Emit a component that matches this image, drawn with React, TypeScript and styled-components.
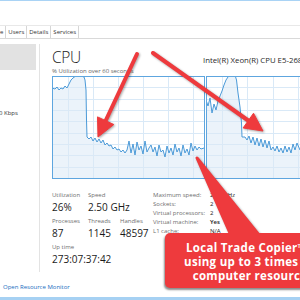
import React from "react";
import styled, { createGlobalStyle } from "styled-components";

const GlobalStyle = createGlobalStyle`
  html, body { margin: 0; padding: 0; background: #fff; }
  body { width: 300px; height: 300px; overflow: hidden; }
  #root { width: 300px; height: 300px; }
`;

const UI_FONT = `"Open Sans", "Noto Sans", "Liberation Sans", sans-serif`;
const RED = "#ee3a3d";

const Page = styled.div`
  position: relative;
  width: 300px;
  height: 300px;
  overflow: hidden;
  display: flex;
  flex-direction: column;
  background: #fff;
  font-family: ${UI_FONT};
  color: #1f1f1f;
`;

const TopAccent = styled.div`
  flex: none;
  height: 1px;
  background: #a9d3f5;
`;

const TitleSpace = styled.div`
  flex: none;
  height: 24px;
`;

const TabBar = styled.div`
  flex: none;
  display: flex;
  height: 12px;
  border-top: 1px solid #e8e8e8;
  border-bottom: 1px solid #d9d9d9;
`;

const Tab = styled.div<{ $offset?: number }>`
  flex: none;
  font-size: 6px;
  line-height: 12px;
  padding: 0 2px;
  border-right: 1px solid #d6d6d6;
  color: #333;
  white-space: nowrap;
  margin-left: ${(p) => p.$offset ?? 0}px;
`;

const Body = styled.div`
  flex: none;
  height: 234px;
  display: flex;
  align-items: flex-start;
`;

const Sidebar = styled.div`
  flex: none;
  width: 39px;
  height: 228px;
  margin-top: 5px;
  border-right: 1px solid #e3e3e3;
  display: flex;
  flex-direction: column;
  overflow: hidden;
`;

const SideItem = styled.div`
  width: 36px;
  height: 26px;
  background: #e2e2e2;
`;

const SideText = styled.div`
  margin-top: 39px;
  margin-left: -1px;
  font-size: 6px;
  line-height: 8px;
  color: #333;
  white-space: nowrap;
`;

const Content = styled.div`
  flex: 1;
  min-width: 0;
  overflow: hidden;
  padding-left: 12px;
  padding-top: 9px;
`;

const Header = styled.div`
  display: grid;
  grid-template-columns: 151px 1fr;
  align-items: baseline;
  height: 18px;
`;

const Title = styled.div`
  font-size: 15.5px;
  font-weight: 300;
  line-height: 18px;
  letter-spacing: -0.3px;
  color: #1a1a1a;
`;

const CpuModel = styled.div`
  font-size: 7.8px;
  line-height: 10px;
  white-space: nowrap;
  overflow: hidden;
  color: #2a2a2a;
`;

const Subtitle = styled.div`
  margin-top: 1px;
  font-size: 6px;
  line-height: 8px;
  color: #666;
  white-space: nowrap;
`;

const ChartRow = styled.div`
  margin-top: 1px;
  display: flex;
  gap: 1px;
  height: 103px;
`;

const ChartSvg = styled.svg`
  flex: none;
  display: block;
`;

const StatsRow = styled.div`
  margin-top: 12px;
  display: flex;
`;

const MainStats = styled.div`
  flex: none;
  width: 101px;
`;

const StatLine = styled.div`
  display: grid;
  grid-template-columns: 36px 32px auto;
  margin-bottom: 3px;
`;

const StatLabel = styled.div`
  font-size: 6px;
  line-height: 8px;
  color: #6e6e6e;
  margin-bottom: 2px;
  white-space: nowrap;
`;

const StatValue = styled.div`
  font-size: 10px;
  line-height: 13px;
  color: #1a1a1a;
  white-space: nowrap;
`;

const SpecList = styled.div`
  display: grid;
  grid-template-columns: 57px auto;
  grid-auto-rows: 9px;
  font-size: 6px;
  line-height: 9px;
`;

const SpecLabel = styled.div`
  color: #6e6e6e;
  white-space: nowrap;
`;

const SpecValue = styled.div<{ $strong?: boolean }>`
  color: #1a1a1a;
  font-weight: ${(p) => (p.$strong ? 600 : 400)};
  white-space: nowrap;
`;

const Footer = styled.div`
  flex: none;
  height: 24px;
  box-sizing: border-box;
  padding: 10px 0 0 3px;
`;

const ResourceLink = styled.a`
  display: block;
  font-size: 6px;
  line-height: 8px;
  color: #1a6dc0;
  text-decoration: none;
`;

const BottomBar = styled.div`
  flex: none;
  height: 3px;
  background: #a6d1f3;
`;

const Overlay = styled.svg`
  position: absolute;
  left: 0;
  top: 0;
  width: 300px;
  height: 300px;
  pointer-events: none;
  filter: drop-shadow(1px 1px 1px rgba(0, 0, 0, 0.35));
`;

const Callout = styled.div`
  position: absolute;
  left: 165px;
  top: 233px;
  width: 176px;
  height: 55px;
  box-sizing: border-box;
  padding-top: 2px;
  background: ${RED};
  border-radius: 5px;
  box-shadow: -1px 2px 2px rgba(0, 0, 0, 0.45);
  color: #fff;
  font-family: "Open Sans", "Lato", sans-serif;
  font-weight: 700;
  font-size: 11.5px;
  letter-spacing: 0.3px;
  line-height: 14px;
  text-align: center;
  display: flex;
  flex-direction: column;
  justify-content: center;
  white-space: nowrap;
`;

type Pt = [number, number];

const chart1: Pt[] = [
  [52, 88], [55, 89], [57, 87], [59, 90], [61, 88], [63, 89], [65, 86], [67, 88], [69, 84], [71, 80],
  [73, 78], [75, 76.5], [78, 76], [82, 76], [84, 77], [85, 80], [86, 90], [86.5, 120], [87, 137],
  [89, 139], [91, 137], [93, 141], [95, 138], [97, 142], [99, 139], [101, 143], [103, 140], [105, 145],
  [107, 143], [109, 146], [111, 145], [113, 149], [115, 147], [117, 150], [119, 149], [121, 152],
  [123, 150], [125, 153], [127, 150], [129, 141], [131, 153], [133, 144], [135, 155], [137, 142],
  [139, 150], [141, 146], [143, 154], [145, 141], [147, 152], [149, 148], [151, 145], [153, 152],
  [155, 147], [157, 156], [159, 145], [161, 152], [163, 150], [165, 157], [167, 146], [169, 153],
  [171, 148], [173, 155], [175, 144], [177, 152], [179, 148], [181, 156], [183, 145], [185, 153],
  [187, 149], [189, 155], [191, 143], [193, 151], [195, 146], [197, 150], [199, 147], [201, 149], [204, 148],
];

const chart2: Pt[] = [
  [206, 100], [208, 106], [210, 98], [212, 113], [214, 104], [216, 110], [218, 101], [220, 96],
  [222, 91], [224, 85], [226, 80], [228, 77], [230, 75], [235, 75], [236.5, 80], [238, 93], [240, 107],
  [241.5, 123], [242, 137], [245, 137], [247, 140], [249, 136], [251, 143], [253, 137], [255, 145],
  [257, 138], [259, 146], [261, 139], [263, 147], [265, 140], [267, 148], [269, 141], [271, 150],
  [273, 147], [275, 151], [277, 146], [279, 152], [281, 148], [283, 153], [285, 146], [287, 152],
  [289, 147], [291, 153], [293, 144], [295, 150], [297, 143], [300, 150], [303, 146],
];

function Chart({ width, originX, points, gridX }: { width: number; originX: number; points: Pt[]; gridX: number[] }) {
  const h = 103;
  const rows = Array.from({ length: 8 }, (_, i) => Math.round(((i + 1) * (h - 1)) / 9) + 0.5);
  const local = points.map(([x, y]) => `${(x - originX).toFixed(1)},${(y - 76).toFixed(1)}`).join(" ");
  const area = `0.5,${h - 1} ${local} ${width - 0.5},${h - 1}`;
  return (
    <ChartSvg width={width} height={h} viewBox={`0 0 ${width} ${h}`}>
      <rect x={0} y={0} width={width} height={h} fill="#fff" />
      {rows.map((y) => (
        <line key={`r${y}`} x1={0} x2={width} y1={y} y2={y} stroke="#d9e9f7" strokeWidth={1} />
      ))}
      {gridX.map((x) => (
        <line key={`c${x}`} x1={x + 0.5} x2={x + 0.5} y1={0} y2={h} stroke="#d9e9f7" strokeWidth={1} />
      ))}
      <polygon points={area} fill="#dbe9f6" fillOpacity={0.55} />
      <polyline points={local} fill="none" stroke="#4b9ad8" strokeWidth={1} strokeLinejoin="round" />
      <rect x={0.5} y={0.5} width={width - 1} height={h - 1} fill="none" stroke="#5ea6df" strokeWidth={1} />
    </ChartSvg>
  );
}

function Arrow({ from, to }: { from: Pt; to: Pt }) {
  const [x1, y1] = from;
  const [x2, y2] = to;
  const len = Math.hypot(x2 - x1, y2 - y1);
  const ux = (x2 - x1) / len;
  const uy = (y2 - y1) / len;
  const px = -uy;
  const py = ux;
  const headLen = 18;
  const half = 9;
  const bx = x2 - ux * headLen;
  const by = y2 - uy * headLen;
  const head = `${x2},${y2} ${bx + px * half},${by + py * half} ${bx - px * half},${by - py * half}`;
  return (
    <g>
      <line x1={x1} y1={y1} x2={bx + ux * 2} y2={by + uy * 2} stroke={RED} strokeWidth={4} strokeLinecap="round" />
      <polygon points={head} fill={RED} stroke={RED} strokeWidth={1} strokeLinejoin="round" />
    </g>
  );
}

export default function App() {
  return (
    <>
      <GlobalStyle />
      <Page>
        <TopAccent />
        <TitleSpace />
        <TabBar>
          <Tab $offset={-35}>Performance</Tab>
          <Tab>Users</Tab>
          <Tab>Details</Tab>
          <Tab>Services</Tab>
        </TabBar>
        <Body>
          <Sidebar>
            <SideItem />
            <SideText>0 Kbps</SideText>
          </Sidebar>
          <Content>
            <Header>
              <Title>CPU</Title>
              <CpuModel>Intel(R) Xeon(R) CPU E5-2680 v2 @ 2.80GHz</CpuModel>
            </Header>
            <Subtitle>% Utilization over 60 seconds</Subtitle>
            <ChartRow>
              <Chart width={153} originX={52} points={chart1} gridX={[16, 41, 66, 91, 116, 141]} />
              <Chart width={100} originX={206} points={chart2} gridX={[16, 41, 67, 92]} />
            </ChartRow>
            <StatsRow>
              <MainStats>
                <StatLine>
                  <div>
                    <StatLabel>Utilization</StatLabel>
                    <StatValue>26%</StatValue>
                  </div>
                  <div>
                    <StatLabel>Speed</StatLabel>
                    <StatValue>2.50 GHz</StatValue>
                  </div>
                </StatLine>
                <StatLine>
                  <div>
                    <StatLabel>Processes</StatLabel>
                    <StatValue>87</StatValue>
                  </div>
                  <div>
                    <StatLabel>Threads</StatLabel>
                    <StatValue>1145</StatValue>
                  </div>
                  <div>
                    <StatLabel>Handles</StatLabel>
                    <StatValue>48597</StatValue>
                  </div>
                </StatLine>
                <StatLine>
                  <div>
                    <StatLabel>Up time</StatLabel>
                    <StatValue>273:07:37:42</StatValue>
                  </div>
                </StatLine>
              </MainStats>
              <SpecList>
                <SpecLabel>Maximum speed:</SpecLabel>
                <SpecValue>2.50 GHz</SpecValue>
                <SpecLabel>Sockets:</SpecLabel>
                <SpecValue>2</SpecValue>
                <SpecLabel>Virtual processors:</SpecLabel>
                <SpecValue>2</SpecValue>
                <SpecLabel>Virtual machine:</SpecLabel>
                <SpecValue $strong>Yes</SpecValue>
                <SpecLabel>L1 cache:</SpecLabel>
                <SpecValue>N/A</SpecValue>
              </SpecList>
            </StatsRow>
          </Content>
        </Body>
        <Footer>
          <ResourceLink>Open Resource Monitor</ResourceLink>
        </Footer>
        <BottomBar />
        <Overlay viewBox="0 0 300 300">
          <Arrow from={[137, 54]} to={[98, 137]} />
          <Arrow from={[153, 53]} to={[263, 131]} />
          <polygon points="197,158 233,240 263,240" fill={RED} stroke={RED} strokeWidth={3} strokeLinejoin="round" />
        </Overlay>
        <Callout>
          <div>Local Trade Copier™ is</div>
          <div>using up to 3 times the</div>
          <div>computer resources</div>
        </Callout>
      </Page>
    </>
  );
}
